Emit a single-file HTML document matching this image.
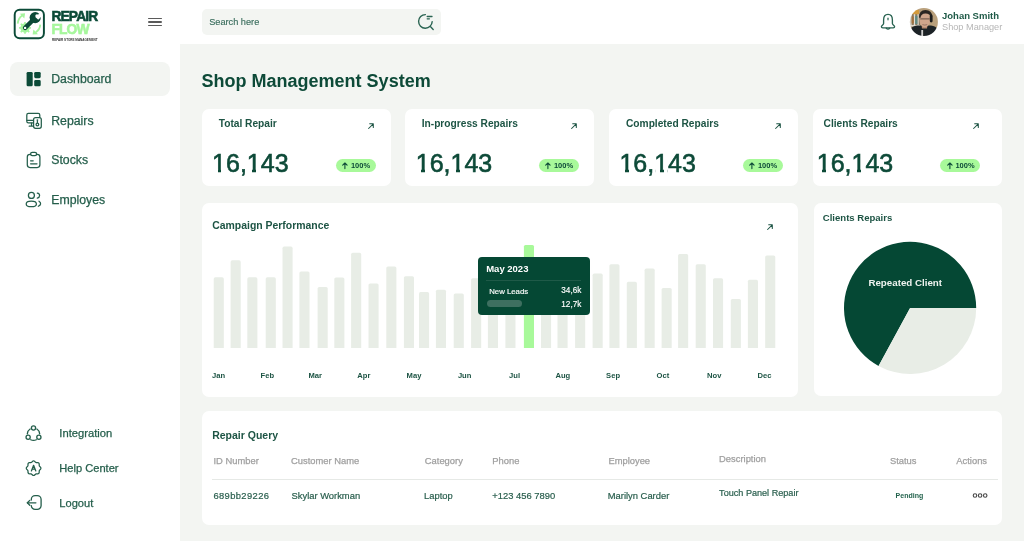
<!DOCTYPE html>
<html><head><meta charset="utf-8">
<style>
*{margin:0;padding:0;box-sizing:border-box}
html,body{width:1024px;height:541px;overflow:hidden;background:#fff;font-family:"Liberation Sans",sans-serif;position:relative}
.a{position:absolute}
.t{position:absolute;white-space:nowrap;line-height:1}
.card{position:absolute;background:#fff;border-radius:7px}
svg{position:absolute;overflow:hidden}
</style></head>
<body>
<div id="root" style="position:absolute;left:0;top:0;width:1024px;height:541px;will-change:transform">
<div class="a" style="left:180px;top:44px;width:844px;height:497px;background:#f3f5f2"></div>
<svg style="left:10px;top:6px" width="40" height="36" viewBox="10 6 40 36">
<rect x="14.7" y="9.7" width="29.2" height="28.6" rx="5" fill="#fff" stroke="#0b4a37" stroke-width="1.95"/>
<g fill="#a6f59e">
<path d="M17.7 23.6 Q18.3 18.2 22.3 15.6" stroke="#a6f59e" stroke-width="1.8" fill="none"/>
<path d="M19.9 13.8 L25.1 13.3 L24.3 18.4 Z"/>
<path d="M40.3 24.6 Q39.9 29.6 35.8 32.2" stroke="#a6f59e" stroke-width="1.8" fill="none"/>
<path d="M38 34.3 L32.6 34.6 L33.4 29.5 Z"/>
<path d="M29.51 26.99 L30.95 27.12 L30.95 28.68 L29.51 28.81 L29.25 29.66 L28.83 30.44 L29.76 31.56 L28.66 32.66 L27.54 31.73 L26.76 32.15 L25.91 32.41 L25.78 33.85 L24.22 33.85 L24.09 32.41 L23.24 32.15 L22.46 31.73 L21.34 32.66 L20.24 31.56 L21.17 30.44 L20.75 29.66 L20.49 28.81 L19.05 28.68 L19.05 27.12 L20.49 26.99 L20.75 26.14 L21.17 25.36 L20.24 24.24 L21.34 23.14 L22.46 24.07 L23.24 23.65 L24.09 23.39 L24.22 21.95 L25.78 21.95 L25.91 23.39 L26.76 23.65 L27.54 24.07 L28.66 23.14 L29.76 24.24 L28.83 25.36 L29.25 26.14 Z"/>
</g>
<path d="M25.1 27.9 L33.8 19.2" stroke="#0b4a37" stroke-width="4.4" stroke-linecap="round"/>
<circle cx="35.2" cy="17.6" r="5.6" fill="#0b4a37"/>
<path d="M35.6 17.2 L40.2 12.6 L42.8 15.2 L38.2 19.8 Z" fill="#fff"/>
<circle cx="37.0" cy="16.0" r="1.75" fill="#fff"/>
<circle cx="25.1" cy="27.9" r="1.2" fill="#fff"/>
</svg>
<div class="t" style="left:51.40px;top:9.62px;font-size:13.8px;font-weight:bold;color:#0b4a37;letter-spacing:-0.85px;-webkit-text-stroke:0.55px currentColor;">REPAIR</div>
<div class="t" style="left:51.40px;top:22.82px;font-size:13.8px;font-weight:bold;color:#a6f79c;letter-spacing:-0.85px;-webkit-text-stroke:0.55px currentColor;">FLOW</div>
<div class="t" style="left:51.5px;top:37.6px;font-size:4px;font-weight:bold;color:#333;transform:scaleX(0.76);transform-origin:0 0">REPAIR STORE MANAGEMENT</div>
<div class="a" style="left:148px;top:17.8px;width:14px;height:1.25px;background:#5a5a5a;border-radius:1px"></div>
<div class="a" style="left:148px;top:21.3px;width:14px;height:1.25px;background:#5a5a5a;border-radius:1px"></div>
<div class="a" style="left:148px;top:25.0px;width:14px;height:1.25px;background:#5a5a5a;border-radius:1px"></div>
<div class="a" style="left:202px;top:9px;width:239px;height:26px;background:#f3f5f2;border-radius:5px"></div>
<div class="t" style="left:209.20px;top:18.21px;font-size:9.2px;font-weight:normal;color:#3b6e5e;-webkit-text-stroke:0.15px currentColor;">Search here</div>
<svg style="left:414px;top:10px" width="24" height="24" viewBox="414 10 24 24">
<path d="M425.4 14.6 A6.8 6.8 0 1 0 432.2 21.6" fill="none" stroke="#2a6452" stroke-width="1.4" stroke-linecap="round"/>
<path d="M430.6 26.8 L433.2 29.4" stroke="#2a6452" stroke-width="1.4" stroke-linecap="round"/>
<path d="M427.2 16.5 H432" stroke="#2a6452" stroke-width="1.3" stroke-linecap="round"/>
<path d="M427.2 18.8 H429.4" stroke="#2a6452" stroke-width="1.3" stroke-linecap="round"/>
</svg>
<svg style="left:876px;top:10px" width="24" height="24" viewBox="876 10 24 24">
<path d="M888 14.4 C884.6 14.4 883.6 17.4 883.6 20 L883.6 23.6 C883.6 25 881.4 25.6 881.4 26.8 C881.4 27.5 882 27.8 882.8 27.8 L893.2 27.8 C894 27.8 894.6 27.5 894.6 26.8 C894.6 25.6 892.4 25 892.4 23.6 L892.4 20 C892.4 17.4 891.4 14.4 888 14.4 Z" fill="none" stroke="#2a6452" stroke-width="1.35" stroke-linejoin="round"/>
<path d="M886.3 28.2 Q888 30 889.7 28.2" fill="none" stroke="#2a6452" stroke-width="1.3" stroke-linecap="round"/>
<path d="M888 18.2 V19.8" stroke="#2a6452" stroke-width="1.2" stroke-linecap="round"/>
</svg>
<svg style="left:909px;top:7px" width="30" height="30" viewBox="909 7 30 30">
<defs><clipPath id="av"><circle cx="923.9" cy="22" r="14"/></clipPath></defs>
<defs><filter id="bl" x="-10%" y="-10%" width="120%" height="120%"><feGaussianBlur stdDeviation="0.35"/></filter></defs><g clip-path="url(#av)"><g filter="url(#bl)">
<rect x="909" y="7" width="30" height="30" fill="#b9a07c"/>
<rect x="909" y="14" width="11" height="13" fill="#8a7a62"/>
<rect x="910.2" y="14" width="1.4" height="12" fill="#e2ded4"/>
<rect x="913.8" y="14" width="1.4" height="12" fill="#e2ded4"/>
<rect x="917.4" y="14" width="1.4" height="12" fill="#d8d2c4"/>
<rect x="911.6" y="16.5" width="2.2" height="7" fill="#a4703a"/>
<rect x="915.2" y="16" width="2.2" height="8" fill="#5f8a84"/>
<rect x="909" y="25" width="11" height="1.6" fill="#e0dbcf"/>
<rect x="911" y="10" width="8" height="4.2" fill="#d49a3a"/>
<path d="M910 38 L910.5 29 Q912 26 917 25.5 L931 25.5 Q936 26 937.5 29 L938 38 Z" fill="#1f2425"/>
<path d="M921.5 25 L927.5 25 L927 28.5 L922 28.5 Z" fill="#b88a70"/>
<ellipse cx="924.8" cy="19.8" rx="5.4" ry="7.4" fill="#cfa58b"/>
<path d="M919 17.5 Q918.8 10.2 925.5 9.9 Q932 10 932.2 16.5 L930.8 17.5 Q930.2 13.4 925.5 13.4 Q921 13.3 920.4 18 Z" fill="#2b2520"/>
<rect x="929.8" y="14.5" width="2.8" height="8" rx="1.4" fill="#1c1c1c"/>
<path d="M920.2 18.9 H929.6" stroke="#4a3a30" stroke-width="0.8"/>
<path d="M922.4 24.6 Q924.8 25.6 927.2 24.6" stroke="#8a6a5a" stroke-width="0.8" fill="none"/>
<rect x="921.3" y="30" width="1.8" height="6" fill="#d0d0d0"/>
</g></g>
</svg>
<div class="t" style="left:942.00px;top:10.76px;font-size:9.5px;font-weight:bold;color:#1f5a47;">Johan Smith</div>
<div class="t" style="left:942.00px;top:23.31px;font-size:9.2px;font-weight:normal;color:#b6b6b6;">Shop Manager</div>
<div class="a" style="left:10px;top:62px;width:160px;height:34px;background:#f3f5f2;border-radius:8px"></div>
<svg style="left:24px;top:70px" width="20" height="20" viewBox="24 70 20 20">
<rect x="26.6" y="71.9" width="6.1" height="14.4" rx="1.4" fill="#0b4a37"/>
<rect x="34.2" y="71.9" width="6.5" height="6.3" rx="1.4" fill="#0b4a37"/>
<rect x="34.2" y="80" width="6.5" height="6.3" rx="1.4" fill="#0b4a37"/>
</svg>
<svg style="left:24px;top:110px" width="20" height="20" viewBox="24 110 20 20">
<g fill="none" stroke="#245e4b" stroke-width="1.25" stroke-linejoin="round" stroke-linecap="round">
<path d="M33.3 122.9 H28.4 Q26.8 122.9 26.8 121.3 V114.9 Q26.8 113.3 28.4 113.3 H38.2 Q39.8 113.3 39.8 114.9 V117.3"/>
<path d="M27 120.4 H33.2"/>
<path d="M31.5 123.1 V126.2 M29.2 126.2 H33"/>
<rect x="33.6" y="117.5" width="7.7" height="10.8" rx="2"/>
<path d="M37.4 121 V122.6"/>
<circle cx="37.4" cy="124.4" r="1.35"/>
</g>
<circle cx="37.4" cy="120.1" r="0.9" fill="#245e4b"/>
</svg>
<svg style="left:24px;top:150px" width="20" height="20" viewBox="24 150 20 20">
<g fill="none" stroke="#245e4b" stroke-width="1.25" stroke-linejoin="round" stroke-linecap="round">
<path d="M30.6 154.4 H30 Q27.3 154.4 27.3 157.1 V164.8 Q27.3 167.5 30 167.5 H37.2 Q39.9 167.5 39.9 164.8 V157.1 Q39.9 154.4 37.2 154.4 H36.6"/>
<rect x="30.6" y="152.4" width="6" height="3.3" rx="1.65"/>
<path d="M30.6 160.8 H33.2 M30.6 163.8 H37"/>
</g>
</svg>
<svg style="left:24px;top:190px" width="20" height="20" viewBox="24 190 20 20">
<g fill="none" stroke="#245e4b" stroke-width="1.25" stroke-linecap="round">
<circle cx="31.4" cy="195.4" r="3.0"/>
<ellipse cx="31.3" cy="203.9" rx="5.1" ry="2.8"/>
<path d="M37.3 193.2 Q39.6 193.6 39.6 195.6 Q39.6 197.6 37.3 198.1"/>
<path d="M39 201.2 Q40.8 202.4 40.6 203.9 Q40.4 205.4 38.3 206.3"/>
</g>
</svg>
<div class="t" style="left:51.20px;top:72.99px;font-size:12.3px;font-weight:normal;color:#245e4b;-webkit-text-stroke:0.25px currentColor;">Dashboard</div>
<div class="t" style="left:51.20px;top:114.69px;font-size:12.3px;font-weight:normal;color:#245e4b;-webkit-text-stroke:0.25px currentColor;">Repairs</div>
<div class="t" style="left:51.20px;top:154.19px;font-size:12.3px;font-weight:normal;color:#245e4b;-webkit-text-stroke:0.25px currentColor;">Stocks</div>
<div class="t" style="left:51.20px;top:194.19px;font-size:12.3px;font-weight:normal;color:#245e4b;-webkit-text-stroke:0.25px currentColor;">Employes</div>
<svg style="left:22px;top:422px" width="24" height="24" viewBox="22 422 24 24">
<g fill="none" stroke="#245e4b" stroke-width="1.3" stroke-linecap="round">
<circle cx="33.50" cy="428.00" r="2.1"/>
<circle cx="28.13" cy="437.30" r="2.1"/>
<circle cx="38.87" cy="437.30" r="2.1"/>
<path d="M36.88 429.00 A6.2 6.2 0 0 1 39.69 433.88"/>
<path d="M36.31 439.72 A6.2 6.2 0 0 1 30.69 439.72"/>
<path d="M27.31 433.88 A6.2 6.2 0 0 1 30.12 429.00"/>
</g>
</svg>
<svg style="left:22px;top:456px" width="24" height="24" viewBox="22 456 24 24">
<path d="M33.60 460.90 L34.07 460.99 L34.52 461.24 L34.92 461.58 L35.28 461.95 L35.62 462.26 L35.97 462.47 L36.37 462.57 L36.84 462.59 L37.35 462.59 L37.88 462.63 L38.36 462.77 L38.76 463.04 L39.03 463.44 L39.17 463.92 L39.21 464.45 L39.21 464.96 L39.23 465.43 L39.33 465.83 L39.54 466.18 L39.85 466.52 L40.22 466.88 L40.56 467.28 L40.81 467.73 L40.90 468.20 L40.81 468.67 L40.56 469.12 L40.22 469.52 L39.85 469.88 L39.54 470.22 L39.33 470.57 L39.23 470.97 L39.21 471.44 L39.21 471.95 L39.17 472.48 L39.03 472.96 L38.76 473.36 L38.36 473.63 L37.88 473.77 L37.35 473.81 L36.84 473.81 L36.37 473.83 L35.97 473.93 L35.62 474.14 L35.28 474.45 L34.92 474.82 L34.52 475.16 L34.07 475.41 L33.60 475.50 L33.13 475.41 L32.68 475.16 L32.28 474.82 L31.92 474.45 L31.58 474.14 L31.23 473.93 L30.83 473.83 L30.36 473.81 L29.85 473.81 L29.32 473.77 L28.84 473.63 L28.44 473.36 L28.17 472.96 L28.03 472.48 L27.99 471.95 L27.99 471.44 L27.97 470.97 L27.87 470.57 L27.66 470.22 L27.35 469.88 L26.98 469.52 L26.64 469.12 L26.39 468.67 L26.30 468.20 L26.39 467.73 L26.64 467.28 L26.98 466.88 L27.35 466.52 L27.66 466.18 L27.87 465.83 L27.97 465.43 L27.99 464.96 L27.99 464.45 L28.03 463.92 L28.17 463.44 L28.44 463.04 L28.84 462.77 L29.32 462.63 L29.85 462.59 L30.36 462.59 L30.83 462.57 L31.23 462.47 L31.58 462.26 L31.92 461.95 L32.28 461.58 L32.68 461.24 L33.13 460.99 L33.60 460.90 Z" fill="none" stroke="#245e4b" stroke-width="1.25" stroke-linejoin="round"/>
<path d="M31.4 470.9 L33.6 465.3 L35.8 470.9 M32.2 469.1 H35" fill="none" stroke="#245e4b" stroke-width="1.3" stroke-linecap="round" stroke-linejoin="round"/>
</svg>
<svg style="left:22px;top:491px" width="24" height="24" viewBox="22 491 24 24">
<g fill="none" stroke="#245e4b" stroke-width="1.3" stroke-linecap="round" stroke-linejoin="round">
<path d="M31.3 500.1 V499.5 A3.8 3.8 0 0 1 35.1 495.7 H37.3 A3.8 3.8 0 0 1 41.1 499.5 V505.6 A3.8 3.8 0 0 1 37.3 509.4 H35.1 A3.8 3.8 0 0 1 31.3 505.6 V505.6"/>
<path d="M27.4 502.8 H35.9"/>
<path d="M29.8 500.4 L27.3 502.8 L29.8 505.2"/>
</g>
</svg>
<div class="t" style="left:59.30px;top:427.92px;font-size:11.2px;font-weight:normal;color:#245e4b;-webkit-text-stroke:0.25px currentColor;">Integration</div>
<div class="t" style="left:59.30px;top:463.20px;font-size:11.1px;font-weight:normal;color:#245e4b;-webkit-text-stroke:0.25px currentColor;">Help Center</div>
<div class="t" style="left:59.30px;top:497.90px;font-size:11.1px;font-weight:normal;color:#245e4b;-webkit-text-stroke:0.25px currentColor;">Logout</div>
<div class="t" style="left:201.60px;top:71.66px;font-size:18px;font-weight:bold;color:#0d4a38;">Shop Management System</div>
<div class="card" style="left:202px;top:109px;width:189px;height:77px"></div>
<div class="t" style="left:218.70px;top:119.47px;font-size:10.2px;font-weight:bold;color:#1d5444;">Total Repair</div>
<div class="t" style="left:212.10px;top:151.14px;font-size:25px;font-weight:normal;color:#0d4a38;-webkit-text-stroke:0.6px currentColor;">16,143</div>
<svg style="left:366px;top:120.7px" width="10" height="10" viewBox="0 0 10 10"><path d="M2.6 7.5 L7.3 2.8 M3.7 2.8 H7.3 V6.4" fill="none" stroke="#1d5444" stroke-width="1.05" stroke-linecap="round" stroke-linejoin="round"/></svg>
<div class="a" style="left:335.7px;top:158.8px;width:40.3px;height:13px;border-radius:7px;background:#a8f99a"></div>
<svg style="left:341.2px;top:161px" width="8" height="9" viewBox="0 0 8 9"><path d="M3.9 7.6 V2 M1.7 4.2 L3.9 2 L6.1 4.2" fill="none" stroke="#0d4a38" stroke-width="1.1" stroke-linecap="round" stroke-linejoin="round"/></svg>
<div class="t" style="left:350.90px;top:162.05px;font-size:7.5px;font-weight:bold;color:#0d4a38;">100%</div>
<div class="card" style="left:405px;top:109px;width:189px;height:77px"></div>
<div class="t" style="left:421.70px;top:119.47px;font-size:10.2px;font-weight:bold;color:#1d5444;">In-progress Repairs</div>
<div class="t" style="left:415.80px;top:151.14px;font-size:25px;font-weight:normal;color:#0d4a38;-webkit-text-stroke:0.6px currentColor;">16,143</div>
<svg style="left:569px;top:120.7px" width="10" height="10" viewBox="0 0 10 10"><path d="M2.6 7.5 L7.3 2.8 M3.7 2.8 H7.3 V6.4" fill="none" stroke="#1d5444" stroke-width="1.05" stroke-linecap="round" stroke-linejoin="round"/></svg>
<div class="a" style="left:538.7px;top:158.8px;width:40.3px;height:13px;border-radius:7px;background:#a8f99a"></div>
<svg style="left:544.2px;top:161px" width="8" height="9" viewBox="0 0 8 9"><path d="M3.9 7.6 V2 M1.7 4.2 L3.9 2 L6.1 4.2" fill="none" stroke="#0d4a38" stroke-width="1.1" stroke-linecap="round" stroke-linejoin="round"/></svg>
<div class="t" style="left:553.90px;top:162.05px;font-size:7.5px;font-weight:bold;color:#0d4a38;">100%</div>
<div class="card" style="left:609px;top:109px;width:189px;height:77px"></div>
<div class="t" style="left:626.00px;top:119.47px;font-size:10.2px;font-weight:bold;color:#1d5444;">Completed Repairs</div>
<div class="t" style="left:619.40px;top:151.14px;font-size:25px;font-weight:normal;color:#0d4a38;-webkit-text-stroke:0.6px currentColor;">16,143</div>
<svg style="left:773px;top:120.7px" width="10" height="10" viewBox="0 0 10 10"><path d="M2.6 7.5 L7.3 2.8 M3.7 2.8 H7.3 V6.4" fill="none" stroke="#1d5444" stroke-width="1.05" stroke-linecap="round" stroke-linejoin="round"/></svg>
<div class="a" style="left:742.7px;top:158.8px;width:40.3px;height:13px;border-radius:7px;background:#a8f99a"></div>
<svg style="left:748.2px;top:161px" width="8" height="9" viewBox="0 0 8 9"><path d="M3.9 7.6 V2 M1.7 4.2 L3.9 2 L6.1 4.2" fill="none" stroke="#0d4a38" stroke-width="1.1" stroke-linecap="round" stroke-linejoin="round"/></svg>
<div class="t" style="left:757.90px;top:162.05px;font-size:7.5px;font-weight:bold;color:#0d4a38;">100%</div>
<div class="card" style="left:813px;top:109px;width:189px;height:77px"></div>
<div class="t" style="left:823.60px;top:119.47px;font-size:10.2px;font-weight:bold;color:#1d5444;">Clients Repairs</div>
<div class="t" style="left:816.80px;top:151.14px;font-size:25px;font-weight:normal;color:#0d4a38;-webkit-text-stroke:0.6px currentColor;">16,143</div>
<svg style="left:970.5px;top:120.7px" width="10" height="10" viewBox="0 0 10 10"><path d="M2.6 7.5 L7.3 2.8 M3.7 2.8 H7.3 V6.4" fill="none" stroke="#1d5444" stroke-width="1.05" stroke-linecap="round" stroke-linejoin="round"/></svg>
<div class="a" style="left:940.2px;top:158.8px;width:40.3px;height:13px;border-radius:7px;background:#a8f99a"></div>
<svg style="left:945.7px;top:161px" width="8" height="9" viewBox="0 0 8 9"><path d="M3.9 7.6 V2 M1.7 4.2 L3.9 2 L6.1 4.2" fill="none" stroke="#0d4a38" stroke-width="1.1" stroke-linecap="round" stroke-linejoin="round"/></svg>
<div class="t" style="left:955.40px;top:162.05px;font-size:7.5px;font-weight:bold;color:#0d4a38;">100%</div>
<div class="a" style="left:213px;top:169px;width:5px;height:4px;background:#fff"></div>
<div class="a" style="left:221px;top:169px;width:4px;height:4px;background:#fff"></div>
<div class="a" style="left:248px;top:169px;width:4px;height:4px;background:#fff"></div>
<div class="a" style="left:256px;top:169px;width:4px;height:4px;background:#fff"></div>
<div class="a" style="left:417px;top:169px;width:4px;height:4px;background:#fff"></div>
<div class="a" style="left:425px;top:169px;width:4px;height:4px;background:#fff"></div>
<div class="a" style="left:452px;top:169px;width:4px;height:4px;background:#fff"></div>
<div class="a" style="left:460px;top:169px;width:4px;height:4px;background:#fff"></div>
<div class="a" style="left:621px;top:169px;width:4px;height:4px;background:#fff"></div>
<div class="a" style="left:629px;top:169px;width:4px;height:4px;background:#fff"></div>
<div class="a" style="left:656px;top:169px;width:4px;height:4px;background:#fff"></div>
<div class="a" style="left:664px;top:169px;width:3px;height:4px;background:#fff"></div>
<div class="a" style="left:818px;top:169px;width:4px;height:4px;background:#fff"></div>
<div class="a" style="left:826px;top:169px;width:4px;height:4px;background:#fff"></div>
<div class="a" style="left:853px;top:169px;width:4px;height:4px;background:#fff"></div>
<div class="a" style="left:861px;top:169px;width:4px;height:4px;background:#fff"></div>
<div class="card" style="left:202px;top:203px;width:596px;height:194px"></div>
<div class="t" style="left:212.20px;top:220.75px;font-size:10.45px;font-weight:bold;color:#1d5444;">Campaign Performance</div>
<svg style="left:765px;top:221.7px" width="10" height="10" viewBox="0 0 10 10"><path d="M2.6 7.5 L7.3 2.8 M3.7 2.8 H7.3 V6.4" fill="none" stroke="#1d5444" stroke-width="1.05" stroke-linecap="round" stroke-linejoin="round"/></svg>
<svg style="left:202px;top:240px" width="590" height="108.1" viewBox="202 240 590 108.1"><rect x="213.7" y="277.3" width="10.1" height="72.7" rx="1.6" fill="#e8ede6"/><rect x="230.6" y="260.3" width="10.1" height="89.7" rx="1.6" fill="#e8ede6"/><rect x="247.3" y="277.3" width="10.1" height="72.7" rx="1.6" fill="#e8ede6"/><rect x="265.7" y="277.3" width="10.1" height="72.7" rx="1.6" fill="#e8ede6"/><rect x="282.5" y="246.6" width="10.1" height="103.4" rx="1.6" fill="#e8ede6"/><rect x="299.4" y="271.5" width="10.1" height="78.5" rx="1.6" fill="#e8ede6"/><rect x="317.6" y="287.0" width="10.1" height="63.0" rx="1.6" fill="#e8ede6"/><rect x="334.3" y="277.5" width="10.1" height="72.5" rx="1.6" fill="#e8ede6"/><rect x="351.1" y="252.8" width="10.1" height="97.2" rx="1.6" fill="#e8ede6"/><rect x="368.5" y="283.5" width="10.1" height="66.5" rx="1.6" fill="#e8ede6"/><rect x="386.3" y="266.5" width="10.1" height="83.5" rx="1.6" fill="#e8ede6"/><rect x="403.9" y="276.2" width="10.1" height="73.8" rx="1.6" fill="#e8ede6"/><rect x="419.0" y="292.1" width="10.1" height="57.9" rx="1.6" fill="#e8ede6"/><rect x="435.9" y="289.7" width="10.1" height="60.3" rx="1.6" fill="#e8ede6"/><rect x="453.7" y="293.5" width="10.1" height="56.5" rx="1.6" fill="#e8ede6"/><rect x="471.1" y="278.2" width="10.1" height="71.8" rx="1.6" fill="#e8ede6"/><rect x="487.9" y="272.0" width="10.1" height="78.0" rx="1.6" fill="#e8ede6"/><rect x="505.4" y="268.0" width="10.1" height="82.0" rx="1.6" fill="#e8ede6"/><rect x="523.9" y="245.0" width="10.1" height="105.0" rx="1.6" fill="#a8f99a"/><rect x="541.0" y="270.0" width="10.1" height="80.0" rx="1.6" fill="#e8ede6"/><rect x="557.5" y="262.0" width="10.1" height="88.0" rx="1.6" fill="#e8ede6"/><rect x="575.1" y="275.0" width="10.1" height="75.0" rx="1.6" fill="#e8ede6"/><rect x="592.6" y="273.6" width="10.1" height="76.4" rx="1.6" fill="#e8ede6"/><rect x="609.4" y="264.2" width="10.1" height="85.8" rx="1.6" fill="#e8ede6"/><rect x="626.8" y="281.8" width="10.1" height="68.2" rx="1.6" fill="#e8ede6"/><rect x="644.6" y="268.6" width="10.1" height="81.4" rx="1.6" fill="#e8ede6"/><rect x="661.6" y="288.0" width="10.1" height="62.0" rx="1.6" fill="#e8ede6"/><rect x="678.1" y="254.1" width="10.1" height="95.9" rx="1.6" fill="#e8ede6"/><rect x="695.7" y="264.2" width="10.1" height="85.8" rx="1.6" fill="#e8ede6"/><rect x="713.0" y="278.3" width="10.1" height="71.7" rx="1.6" fill="#e8ede6"/><rect x="730.8" y="299.0" width="10.1" height="51.0" rx="1.6" fill="#e8ede6"/><rect x="747.9" y="279.7" width="10.1" height="70.3" rx="1.6" fill="#e8ede6"/><rect x="765.2" y="255.5" width="10.1" height="94.5" rx="1.6" fill="#e8ede6"/></svg>
<div class="t" style="left:212.10px;top:372.17px;font-size:7.6px;font-weight:bold;color:#1d5444;">Jan</div>
<div class="t" style="left:260.60px;top:372.17px;font-size:7.6px;font-weight:bold;color:#1d5444;">Feb</div>
<div class="t" style="left:308.50px;top:372.17px;font-size:7.6px;font-weight:bold;color:#1d5444;">Mar</div>
<div class="t" style="left:357.30px;top:372.17px;font-size:7.6px;font-weight:bold;color:#1d5444;">Apr</div>
<div class="t" style="left:406.60px;top:372.17px;font-size:7.6px;font-weight:bold;color:#1d5444;">May</div>
<div class="t" style="left:457.90px;top:372.17px;font-size:7.6px;font-weight:bold;color:#1d5444;">Jun</div>
<div class="t" style="left:509.10px;top:372.17px;font-size:7.6px;font-weight:bold;color:#1d5444;">Jul</div>
<div class="t" style="left:555.50px;top:372.17px;font-size:7.6px;font-weight:bold;color:#1d5444;">Aug</div>
<div class="t" style="left:606.10px;top:372.17px;font-size:7.6px;font-weight:bold;color:#1d5444;">Sep</div>
<div class="t" style="left:656.60px;top:372.17px;font-size:7.6px;font-weight:bold;color:#1d5444;">Oct</div>
<div class="t" style="left:707.10px;top:372.17px;font-size:7.6px;font-weight:bold;color:#1d5444;">Nov</div>
<div class="t" style="left:757.60px;top:372.17px;font-size:7.6px;font-weight:bold;color:#1d5444;">Dec</div>
<div class="a" style="left:477.8px;top:256.8px;width:112.5px;height:57.9px;border-radius:4px;background:#054834"></div>
<div class="t" style="left:486.20px;top:263.66px;font-size:9.5px;font-weight:bold;color:#fff;">May 2023</div>
<div class="a" style="left:486.2px;top:280.4px;width:95px;height:0.8px;background:#1f5a48"></div>
<div class="t" style="left:489.20px;top:287.80px;font-size:7.8px;font-weight:normal;color:#fff;-webkit-text-stroke:0.15px #fff;">New Leads</div>
<div class="t" style="right:442.70px;top:287.46px;font-size:8.2px;font-weight:normal;color:#fff;-webkit-text-stroke:0.15px #fff;">34,6k</div>
<div class="a" style="left:486.6px;top:300.2px;width:35.4px;height:7px;border-radius:3.5px;background:#3e6f60"></div>
<div class="t" style="right:442.70px;top:300.56px;font-size:8.2px;font-weight:normal;color:#fff;-webkit-text-stroke:0.15px #fff;">12,7k</div>
<div class="card" style="left:813.5px;top:203px;width:188.5px;height:193px"></div>
<div class="t" style="left:822.80px;top:212.92px;font-size:9.55px;font-weight:bold;color:#1d5444;">Clients Repairs</div>
<svg style="left:840px;top:238px" width="140" height="140" viewBox="840 238 140 140">
<path d="M910.1 307.9 L878.56 365.99 A66.1 66.1 0 1 1 976.2 307.9 Z" fill="#054834"/>
<path d="M910.1 307.9 L976.2 307.9 A66.1 66.1 0 0 1 878.56 365.99 Z" fill="#e8ede6"/>
</svg>
<div class="t" style="left:868.40px;top:278.35px;font-size:9.75px;font-weight:bold;color:#eef3ef;">Repeated Client</div>
<div class="card" style="left:202px;top:411px;width:800px;height:114px"></div>
<div class="t" style="left:212.20px;top:430.21px;font-size:10.5px;font-weight:bold;color:#1d5444;">Repair Query</div>
<div class="t" style="left:213.50px;top:455.64px;font-size:9.4px;font-weight:normal;color:#a0a0a0;-webkit-text-stroke:0.25px currentColor;">ID Number</div>
<div class="t" style="left:291.00px;top:455.64px;font-size:9.4px;font-weight:normal;color:#a0a0a0;-webkit-text-stroke:0.25px currentColor;">Customer Name</div>
<div class="t" style="left:424.80px;top:455.64px;font-size:9.4px;font-weight:normal;color:#a0a0a0;-webkit-text-stroke:0.25px currentColor;">Category</div>
<div class="t" style="left:492.30px;top:455.64px;font-size:9.4px;font-weight:normal;color:#a0a0a0;-webkit-text-stroke:0.25px currentColor;">Phone</div>
<div class="t" style="left:608.40px;top:455.64px;font-size:9.4px;font-weight:normal;color:#a0a0a0;-webkit-text-stroke:0.25px currentColor;">Employee</div>
<div class="t" style="left:719.10px;top:453.74px;font-size:9.4px;font-weight:normal;color:#a0a0a0;-webkit-text-stroke:0.25px currentColor;">Description</div>
<div class="t" style="left:889.90px;top:455.64px;font-size:9.4px;font-weight:normal;color:#a0a0a0;-webkit-text-stroke:0.25px currentColor;">Status</div>
<div class="t" style="left:956.30px;top:455.64px;font-size:9.4px;font-weight:normal;color:#a0a0a0;-webkit-text-stroke:0.25px currentColor;">Actions</div>
<div class="a" style="left:212px;top:478.8px;width:785.5px;height:1px;background:#e6e9e6"></div>
<div class="t" style="left:213.40px;top:491.24px;font-size:9.4px;font-weight:normal;color:#2a5f4e;-webkit-text-stroke:0.2px currentColor;letter-spacing:0.38px;">689bb29226</div>
<div class="t" style="left:291.50px;top:490.94px;font-size:9.4px;font-weight:normal;color:#2a5f4e;-webkit-text-stroke:0.2px currentColor;">Skylar Workman</div>
<div class="t" style="left:424.00px;top:490.84px;font-size:9.4px;font-weight:normal;color:#2a5f4e;-webkit-text-stroke:0.2px currentColor;">Laptop</div>
<div class="t" style="left:492.30px;top:490.84px;font-size:9.4px;font-weight:normal;color:#2a5f4e;-webkit-text-stroke:0.2px currentColor;">+123 456 7890</div>
<div class="t" style="left:607.80px;top:490.84px;font-size:9.4px;font-weight:normal;color:#2a5f4e;-webkit-text-stroke:0.2px currentColor;">Marilyn Carder</div>
<div class="t" style="left:719.10px;top:489.10px;font-size:9.1px;font-weight:normal;color:#2a5f4e;-webkit-text-stroke:0.2px currentColor;">Touch Panel Repair</div>
<div class="t" style="left:895.60px;top:492.07px;font-size:7px;font-weight:bold;color:#23634d;">Pending</div>
<svg style="left:970px;top:490px" width="20" height="11" viewBox="970 490 20 11">
<g fill="none" stroke="#474747" stroke-width="1.15"><circle cx="975" cy="495.5" r="1.75"/><circle cx="980.1" cy="495.5" r="1.75"/><circle cx="985.2" cy="495.5" r="1.75"/></g>
</svg>
</div></body></html>
